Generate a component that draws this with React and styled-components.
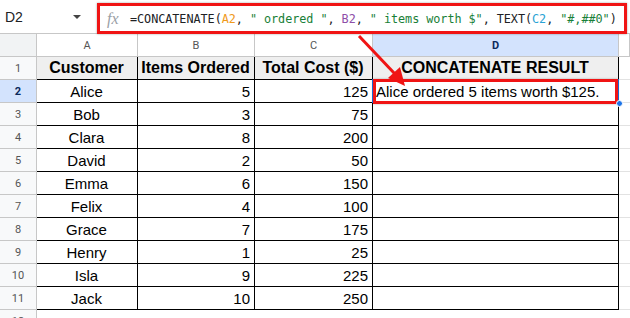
import React from 'react'
import styled, { createGlobalStyle } from 'styled-components'

const Global = createGlobalStyle`
    html, body {
        margin: 0;
        padding: 0;
        background: #fff;
    }
    * { box-sizing: border-box; }
`

const Page = styled.div`
    position: relative;
    width: 630px;
    height: 318px;
    overflow: hidden;
    background: #fff;
    font-family: "Liberation Sans", Arial, sans-serif;
`

const TopBar = styled.div`
    display: flex;
    align-items: flex-start;
    height: 34px;
    border-bottom: 1px solid #c7c7c7;
`

const NameBox = styled.div`
    display: flex;
    align-items: center;
    justify-content: space-between;
    width: 89px;
    height: 33px;
    padding: 0 8px 0 5px;
    font-size: 14px;
    color: #202124;
`

const Caret = styled.span`
    width: 0;
    height: 0;
    border-left: 4px solid transparent;
    border-right: 4px solid transparent;
    border-top: 4px solid #444;
`

const FormulaBox = styled.div`
    display: flex;
    align-items: center;
    margin: 3px 0 0 8px;
    width: 530px;
    height: 31px;
    border: 3px solid #f01414;
    box-shadow: 0 0 2px rgba(0, 0, 0, 0.35);
    padding-left: 7px;
    white-space: nowrap;
    position: relative;
    z-index: 2;
    background: #fff;
`

const Fx = styled.span`
    font-family: "Liberation Serif", serif;
    font-style: italic;
    font-size: 16px;
    color: #9aa0a6;
    width: 23px;
`

const Formula = styled.span`
    font-family: "DejaVu Sans Mono", monospace;
    font-size: 11.8px;
    letter-spacing: -0.05px;
    color: #202124;
`

const Ref = styled.span`
    color: ${p => p.$color};
`

const Sheet = styled.div`
    display: grid;
    grid-template-columns: 37px 101px 117px 118px 246px 1fr;
    grid-auto-rows: 23px;
`

const Corner = styled.div`
    background: #f1f3f4;
    border-right: 1px solid #c7c7c7;
    border-bottom: 1px solid #c7c7c7;
`

const ColHead = styled.div`
    display: flex;
    align-items: center;
    justify-content: center;
    font-family: Roboto, "Liberation Sans", sans-serif;
    font-size: 11px;
    color: ${p => p.$active ? '#0b2a5c' : '#555'};
    font-weight: ${p => p.$active ? 700 : 400};
    background: ${p => p.$active ? '#d3e3fd' : '#fff'};
    border-right: 1px solid #c7c7c7;
    border-bottom: 1px solid #c7c7c7;
`

const RowHead = styled(ColHead)`
    background: ${p => p.$active ? '#d3e3fd' : '#f8f9fa'};
`

const Cell = styled.div`
    position: relative;
    display: flex;
    align-items: center;
    justify-content: ${p => p.$align};
    padding: 0 4px 0 3px;
    font-size: ${p => p.$head ? '16px' : '15px'};
    font-weight: ${p => p.$head ? 700 : 400};
    background: ${p => p.$head ? '#efefef' : '#fff'};
    color: #000;
    white-space: nowrap;
    border-right: 1px solid #000;
    border-bottom: 1px solid #000;
`

const Blank = styled.div`
    border-bottom: 1px solid #e2e2e2;
`

const Selection = styled.div`
    position: absolute;
    left: -1px;
    top: -1px;
    right: -1px;
    bottom: -2px;
    border: 2px solid #1a73e8;
`

const Handle = styled.span`
    position: absolute;
    right: -5px;
    bottom: -5px;
    width: 7px;
    height: 7px;
    border-radius: 50%;
    background: #1a73e8;
    border: 1px solid #fff;
    z-index: 3;
`

const RedBox = styled.div`
    position: absolute;
    left: 0;
    top: -1px;
    right: 0;
    bottom: -2px;
    border: 3px solid #f01414;
    box-shadow: 0 0 2px rgba(0, 0, 0, 0.3);
    z-index: 2;
`

const Arrow = styled.svg`
    position: absolute;
    left: 0;
    top: 0;
    pointer-events: none;
    z-index: 4;
`

const rows = [
    ['Alice', 5, 125],
    ['Bob', 3, 75],
    ['Clara', 8, 200],
    ['David', 2, 50],
    ['Emma', 6, 150],
    ['Felix', 4, 100],
    ['Grace', 7, 175],
    ['Henry', 1, 25],
    ['Isla', 9, 225],
    ['Jack', 10, 250],
]

export default function App() {
    return (
        <Page>
            <Global />
            <TopBar>
                <NameBox>D2<Caret /></NameBox>
                <FormulaBox>
                    <Fx>fx</Fx>
                    <Formula>
                        =CONCATENATE(<Ref $color="#f09a1a">A2</Ref>, <Ref $color="#188038">" ordered "</Ref>, <Ref $color="#8e4ea8">B2</Ref>, <Ref $color="#188038">" items worth $"</Ref>, TEXT(<Ref $color="#2aa3d4">C2</Ref>, <Ref $color="#188038">"#,##0"</Ref>)
                    </Formula>
                </FormulaBox>
            </TopBar>
            <Sheet>
                <Corner />
                {['A', 'B', 'C', 'D'].map(c => (
                    <ColHead key={c} $active={c === 'D'}>{c}</ColHead>
                ))}
                <ColHead />

                <RowHead>1</RowHead>
                <Cell $head $align="center">Customer</Cell>
                <Cell $head $align="center">Items Ordered</Cell>
                <Cell $head $align="center">Total Cost ($)</Cell>
                <Cell $head $align="center">CONCATENATE RESULT</Cell>
                <Blank />

                {rows.map(([name, qty, cost], i) => (
                    <React.Fragment key={name}>
                        <RowHead $active={i === 0}>{i + 2}</RowHead>
                        <Cell $align="center">{name}</Cell>
                        <Cell $align="flex-end">{qty}</Cell>
                        <Cell $align="flex-end">{cost}</Cell>
                        <Cell $align="flex-start">
                            {i === 0 && 'Alice ordered 5 items worth $125.'}
                            {i === 0 && <Selection />}
                            {i === 0 && <RedBox />}
                            {i === 0 && <Handle />}
                        </Cell>
                        <Blank />
                    </React.Fragment>
                ))}

                <RowHead>12</RowHead>
            </Sheet>
            <Arrow width="630" height="318">
                <line x1="359" y1="36" x2="395" y2="74" stroke="#f01414" strokeWidth="3" />
                <polygon points="405,86 388,78 400,67" fill="#f01414" />
            </Arrow>
        </Page>
    )
}
